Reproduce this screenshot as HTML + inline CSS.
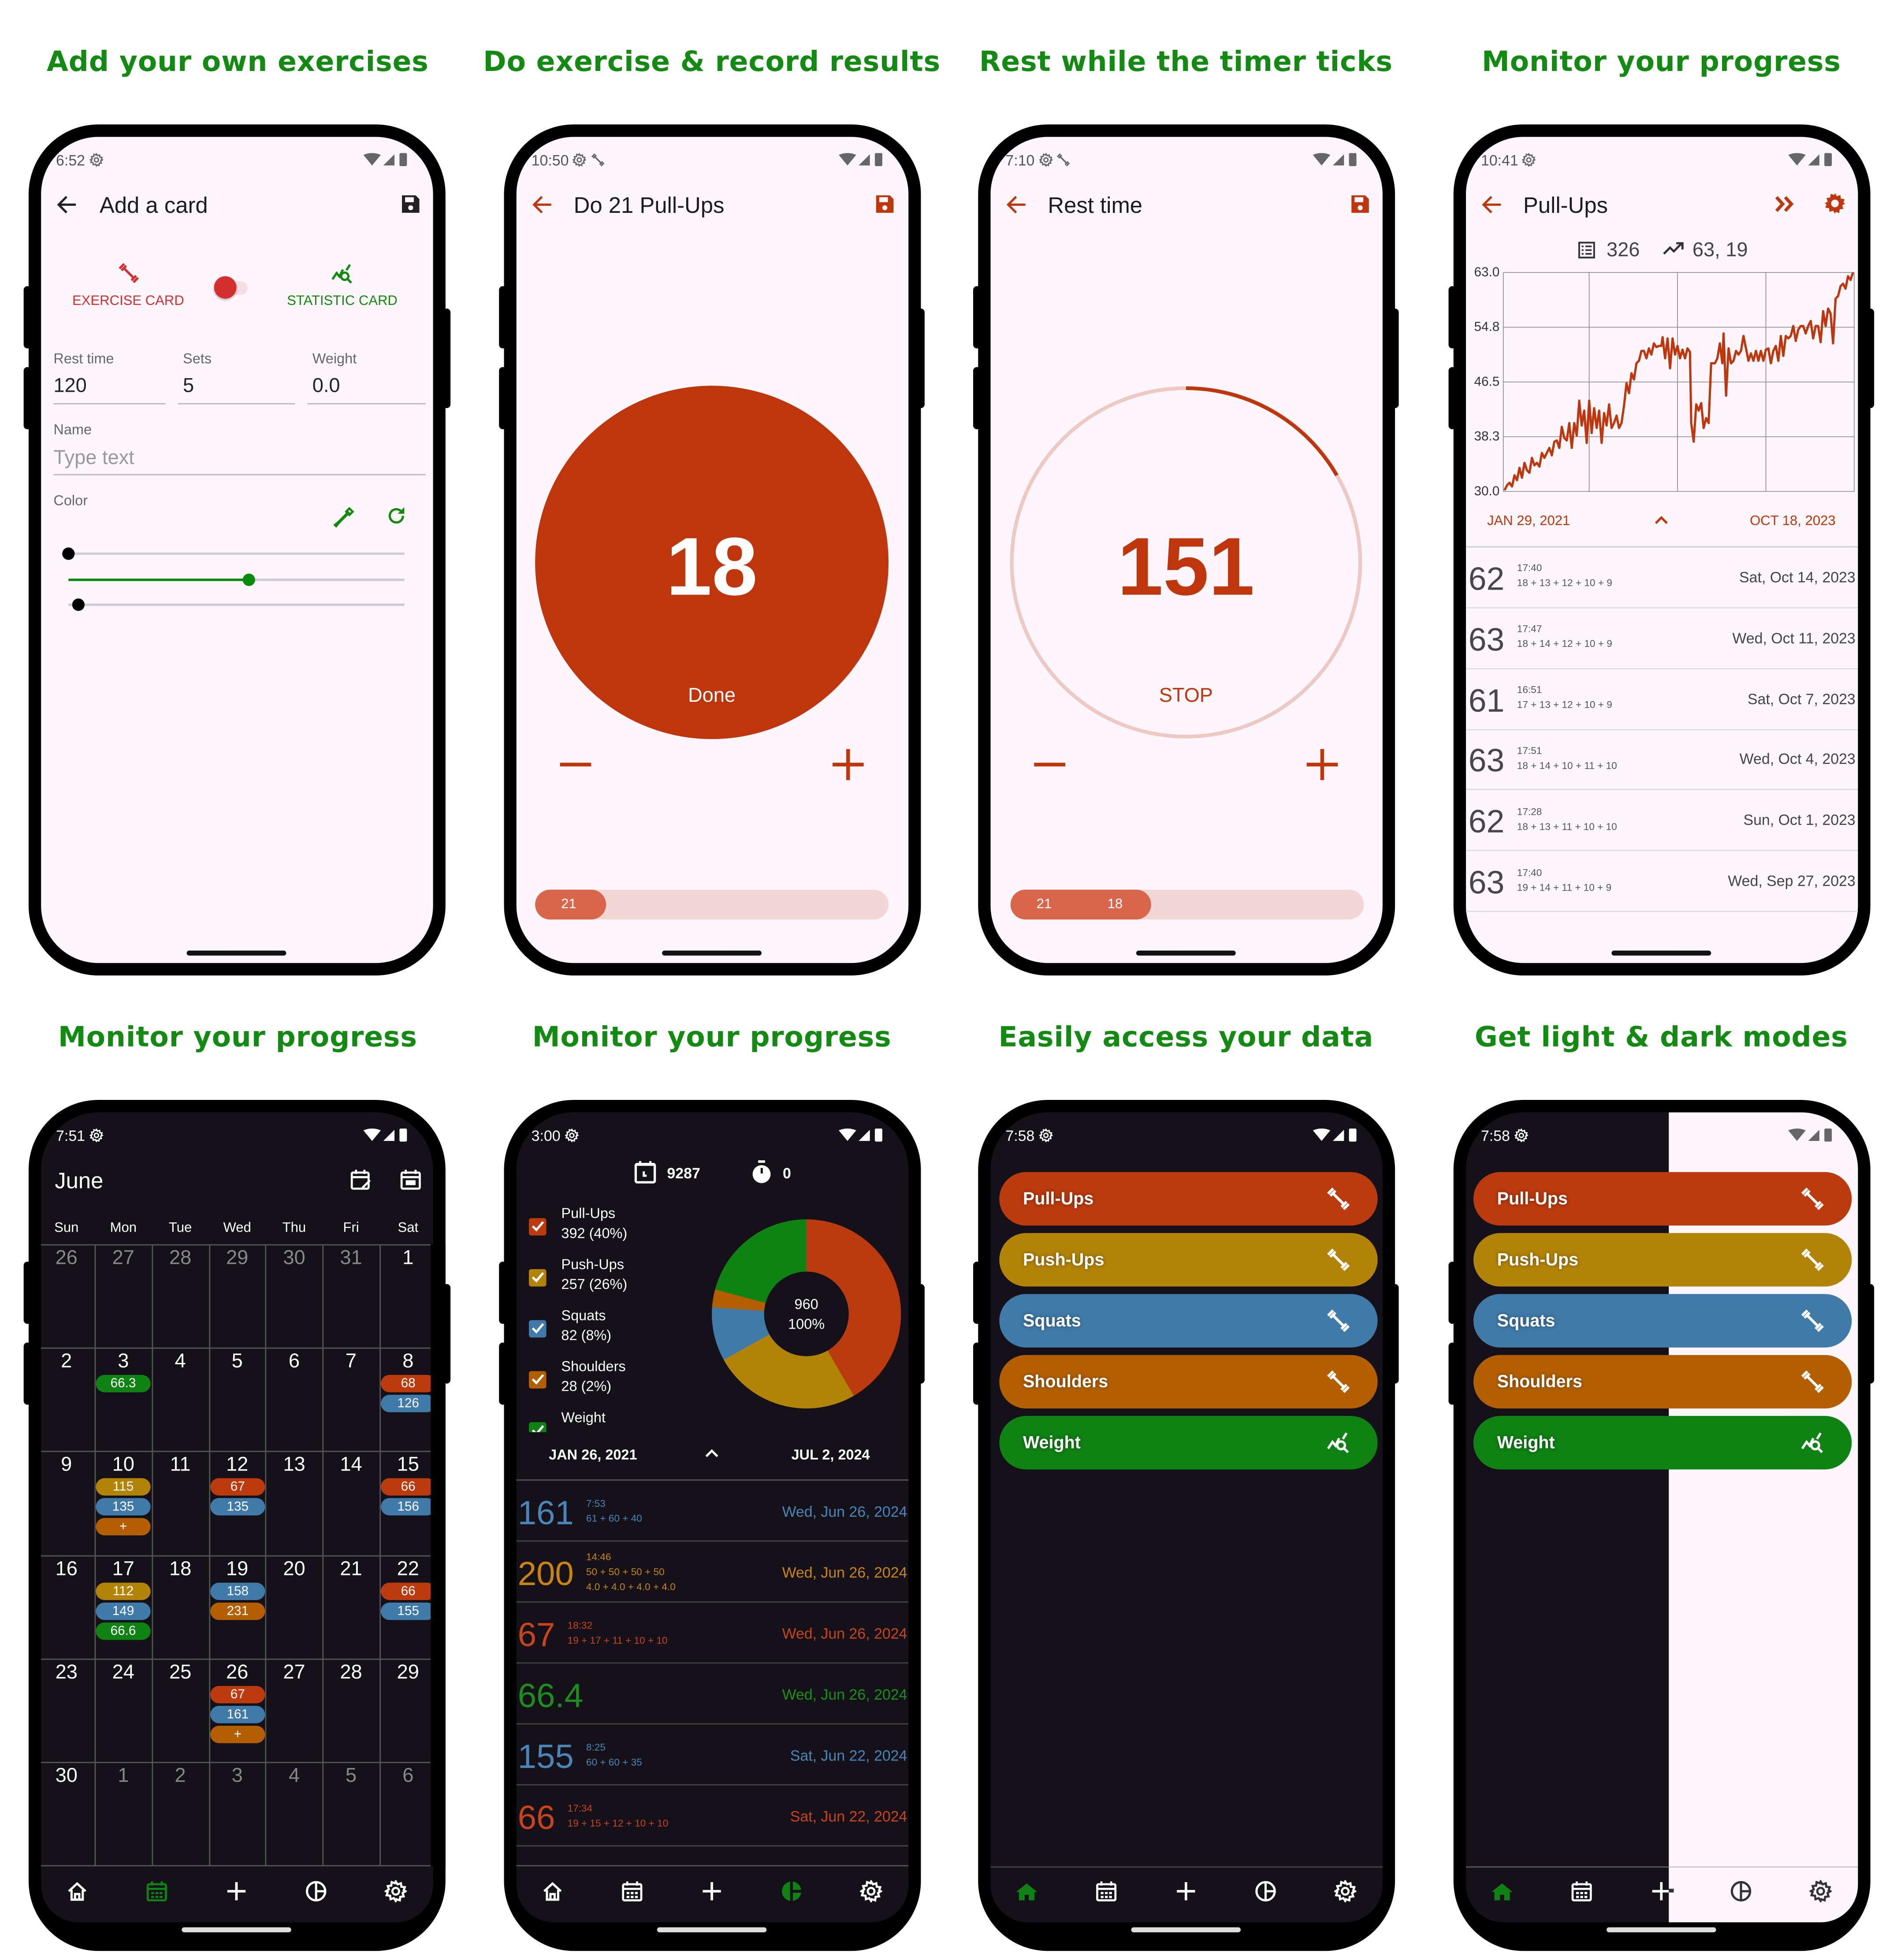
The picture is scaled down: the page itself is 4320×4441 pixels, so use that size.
<!DOCTYPE html>
<html><head><meta charset="utf-8"><style>
html,body{margin:0;padding:0;background:#fff;width:4320px;height:4440px;overflow:hidden}
#w{position:absolute;left:0;top:0;width:1530px;height:1573px;transform:scale(2.82353);transform-origin:0 0;font-family:"Liberation Sans","DejaVu Sans",sans-serif}
.a{position:absolute}
.t{position:absolute;line-height:1;white-space:nowrap}
.c{transform:translateX(-50%)}
.r{transform:translateX(-100%)}
.ttl{position:absolute;width:400px;text-align:center;font-family:"DejaVu Sans",sans-serif;font-weight:bold;font-size:22.4px;color:#138a12;line-height:1;letter-spacing:.3px}
.ph{position:absolute;width:335px;height:684px;background:#000;border-radius:56px}
.sc{position:absolute;left:10px;top:10px;width:315px;height:664px;border-radius:46px;overflow:hidden;background:#fdf7fd}
.dk .sc{background:#141218;height:651px;border-radius:46px 46px 30px 30px}
.btnL{position:absolute;background:#000;border-radius:3px}
.ul{position:absolute;height:1px;background:#b9b5bd}
.bd{position:absolute;height:14px;border-radius:7px;color:#fff;font-size:10.5px;line-height:14px;text-align:center}
.cg{position:absolute;background:#555;}
.pill{position:absolute;left:0;width:304px;height:43px;border-radius:22px;color:#fff;font-size:14px;font-weight:bold;line-height:43px;text-indent:19px;text-shadow:0 0 3px rgba(0,0,0,.4)}
.hb{position:absolute;height:4px;border-radius:2px;width:80px}
</style></head><body><div id="w">
<svg width="0" height="0" style="position:absolute">
<defs>
<symbol id="db" viewBox="0 0 16 16"><path d="M4 4L12 12" stroke="currentColor" stroke-width="1.8" fill="none"/><path d="M1 4.5L4.5 1M2.5 6L6 2.5M10 13.5L13.5 10M11.5 15L15 11.5" stroke="currentColor" stroke-width="1.8" fill="none"/></symbol>
<symbol id="st" viewBox="0 0 16 16"><path d="M1 12L4 7.5L6 10L8.5 5" stroke="currentColor" stroke-width="1.6" fill="none"/><circle cx="9.8" cy="9.8" r="2.6" stroke="currentColor" stroke-width="1.6" fill="none"/><path d="M11.8 11.8L14.5 14.5M11 5.5L13.5 1.5" stroke="currentColor" stroke-width="1.6" fill="none"/></symbol>
<symbol id="sb" viewBox="0 0 38 12"><path d="M0 1.5Q7 -1.5 14 1.5L7 10Z"/><path d="M16 10L25 1V10Z"/><rect x="29" y="0" width="6" height="10.5" rx="1"/></symbol>
<symbol id="ar" viewBox="0 0 16 16"><path d="M15 8H2M8 2L2 8l6 6" stroke="currentColor" stroke-width="1.7" fill="none"/></symbol>
<symbol id="sv" viewBox="0 0 16 16"><path d="M1 1H12L15 4V15H1Z" fill="currentColor"/><rect x="3.5" y="2.5" width="7" height="4" fill="#fdf7fd"/><circle cx="8" cy="11" r="2" fill="#fdf7fd"/></symbol>
<symbol id="gr" viewBox="0 0 16 16"><path d="M8 1l1.3 2.1 2.4-.8.3 2.5 2.5.3-.8 2.4L15 8l-2.1 1.3.8 2.4-2.5.3-.3 2.5-2.4-.8L8 15l-1.3-2.1-2.4.8-.3-2.5-2.5-.3.8-2.4L1 8l2.1-1.3-.8-2.4 2.5-.3.3-2.5 2.4.8Z" fill="currentColor"/><circle cx="8" cy="8" r="2.6" fill="var(--h,#fdf7fd)"/></symbol>
<symbol id="gro" viewBox="0 0 16 16"><path d="M8 1l1.3 2.1 2.4-.8.3 2.5 2.5.3-.8 2.4L15 8l-2.1 1.3.8 2.4-2.5.3-.3 2.5-2.4-.8L8 15l-1.3-2.1-2.4.8-.3-2.5-2.5-.3.8-2.4L1 8l2.1-1.3-.8-2.4 2.5-.3.3-2.5 2.4.8Z" fill="none" stroke="currentColor" stroke-width="1.5"/><circle cx="8" cy="8" r="2.4" fill="none" stroke="currentColor" stroke-width="1.5"/></symbol>
<symbol id="hm" viewBox="0 0 16 16"><path d="M2 8L8 2.5L14 8M4 7V14H12V7M6.5 14V10H9.5V14" stroke="currentColor" stroke-width="1.6" fill="none"/></symbol>
<symbol id="hmf" viewBox="0 0 16 16"><path d="M0.5 8.5L8 2.5L15.5 8.5H13.5V14.5H9.5V10.5H6.5V14.5H2.5V8.5Z" fill="currentColor"/></symbol>
<symbol id="cl" viewBox="0 0 16 16"><rect x="1.5" y="3" width="13" height="11.5" rx="1" stroke="currentColor" stroke-width="1.5" fill="none"/><path d="M1.5 6.3H14.5M4.5 1V4M11.5 1V4" stroke="currentColor" stroke-width="1.5"/><path d="M4 8.5h2v1.6H4zM7 8.5h2v1.6H7zM10 8.5h2v1.6h-2zM4 11.3h2v1.6H4zM7 11.3h2v1.6H7zM10 11.3h2v1.6h-2z" fill="currentColor"/></symbol>
<symbol id="pl" viewBox="0 0 16 16"><path d="M8 1.5V14.5M1.5 8H14.5" stroke="currentColor" stroke-width="1.8"/></symbol>
<symbol id="pi" viewBox="0 0 16 16"><circle cx="8" cy="8" r="6.5" stroke="currentColor" stroke-width="1.6" fill="none"/><path d="M8 1.5V14.5M8 8H14.5" stroke="currentColor" stroke-width="1.6"/></symbol>
<symbol id="pif" viewBox="0 0 16 16"><path d="M7 1.1A7 7 0 0 0 7 14.9Z" fill="currentColor"/><path d="M9 1.1A7 7 0 0 1 14.9 7H9Z" fill="currentColor"/><path d="M9 9H14.9A7 7 0 0 1 9 14.9Z" fill="currentColor"/></symbol>
</defs></svg>

<div class="ttl" style="left:-9px;top:39px">Add your own exercises</div>
<div class="ttl" style="left:372px;top:39px">Do exercise &amp; record results</div>
<div class="ttl" style="left:753px;top:39px">Rest while the timer ticks</div>
<div class="ttl" style="left:1135px;top:39px">Monitor your progress</div>
<div class="ttl" style="left:-9px;top:823px">Monitor your progress</div>
<div class="ttl" style="left:372px;top:823px">Monitor your progress</div>
<div class="ttl" style="left:753px;top:823px">Easily access your data</div>
<div class="ttl" style="left:1135px;top:823px">Get light &amp; dark modes</div>

<div class="btnL" style="left:19px;top:230px;width:6px;height:50px"></div><div class="btnL" style="left:19px;top:295px;width:6px;height:50px"></div><div class="btnL" style="left:356px;top:248px;width:6px;height:80px"></div>
<div class="btnL" style="left:401px;top:230px;width:6px;height:50px"></div><div class="btnL" style="left:401px;top:295px;width:6px;height:50px"></div><div class="btnL" style="left:737px;top:248px;width:6px;height:80px"></div>
<div class="btnL" style="left:782px;top:230px;width:6px;height:50px"></div><div class="btnL" style="left:782px;top:295px;width:6px;height:50px"></div><div class="btnL" style="left:1118px;top:248px;width:6px;height:80px"></div>
<div class="btnL" style="left:1164px;top:230px;width:6px;height:50px"></div><div class="btnL" style="left:1164px;top:295px;width:6px;height:50px"></div><div class="btnL" style="left:1500px;top:248px;width:6px;height:80px"></div>
<div class="btnL" style="left:19px;top:1014px;width:6px;height:50px"></div><div class="btnL" style="left:19px;top:1079px;width:6px;height:50px"></div><div class="btnL" style="left:356px;top:1032px;width:6px;height:80px"></div>
<div class="btnL" style="left:401px;top:1014px;width:6px;height:50px"></div><div class="btnL" style="left:401px;top:1079px;width:6px;height:50px"></div><div class="btnL" style="left:737px;top:1032px;width:6px;height:80px"></div>
<div class="btnL" style="left:782px;top:1014px;width:6px;height:50px"></div><div class="btnL" style="left:782px;top:1079px;width:6px;height:50px"></div><div class="btnL" style="left:1118px;top:1032px;width:6px;height:80px"></div>
<div class="btnL" style="left:1164px;top:1014px;width:6px;height:50px"></div><div class="btnL" style="left:1164px;top:1079px;width:6px;height:50px"></div><div class="btnL" style="left:1500px;top:1032px;width:6px;height:80px"></div>

<div class="ph" style="left:23px;top:100px"><div class="sc"></div></div>
<div class="ph" style="left:405px;top:100px"><div class="sc"></div></div>
<div class="ph" style="left:786px;top:100px"><div class="sc"></div></div>
<div class="ph" style="left:1168px;top:100px"><div class="sc"></div></div>
<div class="ph dk" style="left:23px;top:884px"><div class="sc"></div></div>
<div class="ph dk" style="left:405px;top:884px"><div class="sc"></div></div>
<div class="ph dk" style="left:786px;top:884px"><div class="sc"></div></div>
<div class="ph dk" style="left:1168px;top:884px"><div class="sc"><div class="a" style="left:163px;top:0;width:160px;height:651px;background:#fdf7fd"></div></div></div>

<!-- PHONE 1 -->
<div class="t" style="left:45px;top:123px;font-size:12px;color:#555">6:52 <svg width="11" height="11" style="vertical-align:-1px;color:#666"><use href="#gro"/></svg></div>
<svg class="a" style="left:292px;top:123px;fill:#666" width="38" height="12"><use href="#sb"/></svg>
<svg class="a" style="left:45px;top:156px;color:#222" width="17" height="17"><use href="#ar"/></svg>
<div class="t" style="left:80px;top:156px;font-size:18px;color:#1d1b20">Add a card</div>
<svg class="a" style="left:322px;top:156px;color:#222" width="16" height="16"><use href="#sv"/></svg>
<svg class="a" style="left:95px;top:211px;color:#d32f2f" width="17" height="17"><use href="#db"/></svg>
<div class="t c" style="left:103px;top:237px;font-size:11px;color:#d32f2f">EXERCISE CARD</div>
<div class="a" style="left:177px;top:226px;width:22px;height:11px;border-radius:6px;background:#f6dde1"></div>
<div class="a" style="left:172px;top:222px;width:18px;height:18px;border-radius:50%;background:#d32f2f;box-shadow:0 1px 2px rgba(0,0,0,.3)"></div>
<svg class="a" style="left:266px;top:211px;color:#14890f" width="18" height="18"><use href="#st"/></svg>
<div class="t c" style="left:275px;top:237px;font-size:11px;color:#14890f">STATISTIC CARD</div>
<div class="t" style="left:43px;top:284px;font-size:11.5px;color:#666">Rest time</div>
<div class="t" style="left:147px;top:284px;font-size:11.5px;color:#666">Sets</div>
<div class="t" style="left:251px;top:284px;font-size:11.5px;color:#666">Weight</div>
<div class="t" style="left:43px;top:303px;font-size:16px;color:#222">120</div>
<div class="t" style="left:147px;top:303px;font-size:16px;color:#222">5</div>
<div class="t" style="left:251px;top:303px;font-size:16px;color:#222">0.0</div>
<div class="ul" style="left:43px;top:324px;width:90px"></div>
<div class="ul" style="left:143px;top:324px;width:94px"></div>
<div class="ul" style="left:247px;top:324px;width:95px"></div>
<div class="t" style="left:43px;top:341px;font-size:11.5px;color:#666">Name</div>
<div class="t" style="left:43px;top:361px;font-size:16px;color:#999">Type text</div>
<div class="ul" style="left:43px;top:381px;width:299px"></div>
<div class="t" style="left:43px;top:398px;font-size:11.5px;color:#666">Color</div>
<svg class="a" style="left:268px;top:407px" width="17" height="17" viewBox="0 0 16 16"><path d="M12 1.5L14.5 4L12.5 6L10 3.5ZM9 3.5L12.5 7M11 5.5L4 12.5L2 15L1 14L3.5 12L10.5 5" stroke="#14890f" stroke-width="1.6" fill="none"/></svg>
<svg class="a" style="left:310px;top:406px" width="17" height="17" viewBox="0 0 16 16"><path d="M13 8A5 5 0 1 1 11.5 4.5" stroke="#14890f" stroke-width="1.7" fill="none"/><path d="M14 1.5V6.5H9Z" fill="#14890f"/></svg>
<div class="a" style="left:55px;top:444px;width:270px;height:2px;background:#d0ccd4"></div>
<div class="a" style="left:50px;top:440px;width:10px;height:10px;border-radius:50%;background:#000"></div>
<div class="a" style="left:55px;top:465px;width:270px;height:2px;background:#d0ccd4"></div>
<div class="a" style="left:55px;top:465px;width:145px;height:2px;background:#0a8a0a"></div>
<div class="a" style="left:195px;top:461px;width:10px;height:10px;border-radius:50%;background:#0a8a0a"></div>
<div class="a" style="left:55px;top:485px;width:270px;height:2px;background:#d0ccd4"></div>
<div class="a" style="left:58px;top:481px;width:10px;height:10px;border-radius:50%;background:#000"></div>
<div class="hb" style="left:150px;top:764px;background:#111"></div>

<!-- PHONE 2 -->
<div class="t" style="left:427px;top:123px;font-size:12px;color:#555">10:50 <svg width="11" height="11" style="vertical-align:-1px;color:#666"><use href="#gro"/></svg> <svg width="11" height="11" style="vertical-align:-1px;color:#666"><use href="#db"/></svg></div>
<svg class="a" style="left:674px;top:123px;fill:#666" width="38" height="12"><use href="#sb"/></svg>
<svg class="a" style="left:427px;top:156px;color:#bf360c" width="17" height="17"><use href="#ar"/></svg>
<div class="t" style="left:461px;top:156px;font-size:18px;color:#1d1b20">Do 21 Pull-Ups</div>
<svg class="a" style="left:703px;top:156px;color:#bf360c" width="16" height="16"><use href="#sv"/></svg>
<div class="a" style="left:430px;top:310px;width:284px;height:284px;border-radius:50%;background:#bf360c"></div>
<div class="t c" style="left:572px;top:422px;font-size:66px;font-weight:bold;color:#fff">18</div>
<div class="t c" style="left:572px;top:552px;font-size:16px;color:#fff">Done</div>
<div class="a" style="left:450px;top:613px;width:25px;height:2.5px;background:#bf360c"></div>
<div class="a" style="left:669px;top:613px;width:25px;height:2.5px;background:#bf360c"></div>
<div class="a" style="left:680.3px;top:602px;width:2.5px;height:25px;background:#bf360c"></div>
<div class="a" style="left:430px;top:715px;width:284px;height:24px;border-radius:12px;background:#f3d6d6"></div>
<div class="a" style="left:430px;top:715px;width:57px;height:24px;border-radius:12px;background:#d9654a"></div>
<div class="t c" style="left:457px;top:722px;font-size:11px;color:#fff">21</div>
<div class="hb" style="left:532px;top:764px;background:#111"></div>

<!-- PHONE 3 -->
<div class="t" style="left:808px;top:123px;font-size:12px;color:#555">7:10 <svg width="11" height="11" style="vertical-align:-1px;color:#666"><use href="#gro"/></svg> <svg width="11" height="11" style="vertical-align:-1px;color:#666"><use href="#db"/></svg></div>
<svg class="a" style="left:1055px;top:123px;fill:#666" width="38" height="12"><use href="#sb"/></svg>
<svg class="a" style="left:808px;top:156px;color:#bf360c" width="17" height="17"><use href="#ar"/></svg>
<div class="t" style="left:842px;top:156px;font-size:18px;color:#1d1b20">Rest time</div>
<svg class="a" style="left:1085px;top:156px;color:#bf360c" width="16" height="16"><use href="#sv"/></svg>
<svg class="a" style="left:800px;top:300px" width="310" height="310" viewBox="800 300 310 310"><circle cx="953" cy="452" r="140" stroke="#eec9c3" stroke-width="3" fill="none"/><path d="M953 312A140 140 0 0 1 1074.2 382" stroke="#bf360c" stroke-width="3" fill="none"/></svg>
<div class="t c" style="left:953px;top:422px;font-size:66px;font-weight:bold;color:#bf360c">151</div>
<div class="t c" style="left:953px;top:552px;font-size:16px;color:#bf360c">STOP</div>
<div class="a" style="left:831px;top:613px;width:25px;height:2.5px;background:#bf360c"></div>
<div class="a" style="left:1050px;top:613px;width:25px;height:2.5px;background:#bf360c"></div>
<div class="a" style="left:1061.3px;top:602px;width:2.5px;height:25px;background:#bf360c"></div>
<div class="a" style="left:812px;top:715px;width:284px;height:24px;border-radius:12px;background:#f3d6d6"></div>
<div class="a" style="left:812px;top:715px;width:113px;height:24px;border-radius:12px;background:#d9654a"></div>
<div class="t c" style="left:839px;top:722px;font-size:11px;color:#fff">21</div>
<div class="t c" style="left:896px;top:722px;font-size:11px;color:#fff">18</div>
<div class="hb" style="left:913px;top:764px;background:#111"></div>

<!-- PHONE 4 -->
<div class="t" style="left:1190px;top:123px;font-size:12px;color:#555">10:41 <svg width="11" height="11" style="vertical-align:-1px;color:#666"><use href="#gro"/></svg></div>
<svg class="a" style="left:1437px;top:123px;fill:#666" width="38" height="12"><use href="#sb"/></svg>
<svg class="a" style="left:1190px;top:156px;color:#bf360c" width="17" height="17"><use href="#ar"/></svg>
<div class="t" style="left:1224px;top:156px;font-size:18px;color:#1d1b20">Pull-Ups</div>
<svg class="a" style="left:1426px;top:157px" width="16" height="14" viewBox="0 0 16 14"><path d="M1.5 1.5L6.5 7L1.5 12.5M8.5 1.5L13.5 7L8.5 12.5" stroke="#bf360c" stroke-width="2.6" fill="none"/></svg>
<svg class="a" style="left:1465px;top:154px;color:#bf360c;--h:#fdf7fd" width="19" height="19"><use href="#gr"/></svg>
<svg class="a" style="left:1268px;top:194px" width="14" height="14" viewBox="0 0 14 14"><rect x="1" y="1" width="12" height="12" stroke="#333" stroke-width="1.4" fill="none"/><path d="M3 4h1.5M6 4h5M3 7h1.5M6 7h5M3 10h1.5M6 10h5" stroke="#333" stroke-width="1.3"/></svg>
<div class="t" style="left:1291px;top:194px;font-size:16px;color:#444">326</div>
<svg class="a" style="left:1336px;top:194px" width="18" height="12" viewBox="0 0 18 12"><path d="M1 10L6 5L9 8L15 2M11 1.5H16V6.5" stroke="#333" stroke-width="1.7" fill="none"/></svg>
<div class="t" style="left:1360px;top:194px;font-size:16px;color:#444">63, 19</div>
<svg class="a" style="left:1178px;top:210px" width="315" height="195" viewBox="1178 210 315 195">
<g stroke="#8a8a8f" stroke-width=".6" fill="none"><path d="M1208 219H1490M1208 263H1490M1208 307H1490M1208 351H1490M1208 395H1490M1208 219V395M1277 219V395M1348 219V395M1419 219V395M1490 219V395"/></g>
<polyline fill="none" stroke="#bf360c" stroke-width="1.8" stroke-linejoin="round" points="1209,394 1211,390 1213,388 1215,391 1217,382 1219,386 1221,376 1223,384 1225,372 1227,378 1229,380 1231,368 1233,374 1235,372 1237,375 1239,364 1241,368 1243,364 1245,360 1247,366 1249,355 1251,354 1253,360 1255,343 1257,352 1259,354 1261,340 1263,360 1265,340 1267,350 1269,322 1271,342 1273,330 1275,356 1277,322 1279,348 1281,328 1283,344 1285,330 1287,356 1289,332 1291,342 1293,325 1295,344 1297,340 1299,334 1301,344 1303,340 1305,326 1307,308 1309,316 1311,300 1313,305 1315,292 1317,290 1319,282 1321,282 1323,288 1325,280 1327,285 1329,276 1331,279 1333,278 1335,278 1336,271 1338,288 1340,272 1342,296 1344,272 1346,285 1348,278 1350,288 1352,281 1354,288 1356,280 1358,283 1359,340 1361,355 1363,325 1365,330 1367,324 1369,344 1371,336 1373,340 1375,292 1378,292 1380,288 1382,276 1384,292 1385,268 1387,318 1389,280 1391,292 1393,290 1395,282 1397,285 1399,282 1401,270 1403,280 1405,290 1407,284 1409,290 1411,282 1413,290 1415,282 1417,290 1419,281 1421,280 1423,292 1425,282 1427,278 1429,290 1431,270 1433,286 1435,270 1437,272 1439,270 1441,262 1443,274 1445,265 1447,262 1449,262 1451,268 1453,262 1455,258 1457,272 1459,262 1461,262 1463,275 1465,250 1467,262 1469,248 1471,252 1473,276 1475,240 1477,238 1479,230 1481,228 1483,232 1485,222 1487,225 1489,219"/>
</svg>
<div class="t r" style="left:1205px;top:214px;font-size:10.5px;color:#333">63.0</div>
<div class="t r" style="left:1205px;top:258px;font-size:10.5px;color:#333">54.8</div>
<div class="t r" style="left:1205px;top:302px;font-size:10.5px;color:#333">46.5</div>
<div class="t r" style="left:1205px;top:346px;font-size:10.5px;color:#333">38.3</div>
<div class="t r" style="left:1205px;top:390px;font-size:10.5px;color:#333">30.0</div>
<div class="t" style="left:1195px;top:414px;font-size:11px;color:#bf360c">JAN 29, 2021</div>
<svg class="a" style="left:1329px;top:414px" width="12" height="8" viewBox="0 0 12 8"><path d="M1.5 6.5L6 2L10.5 6.5" stroke="#bf360c" stroke-width="1.8" fill="none"/></svg>
<div class="t r" style="left:1475px;top:414px;font-size:11px;color:#bf360c">OCT 18, 2023</div>
<div class="a" style="left:1178px;top:439px;width:315px;height:1px;background:#ccc"></div>
<div class="a" style="left:1178px;top:488px;width:315px;height:1px;background:#ddd"></div>
<div class="a" style="left:1178px;top:537px;width:315px;height:1px;background:#ddd"></div>
<div class="a" style="left:1178px;top:586px;width:315px;height:1px;background:#ddd"></div>
<div class="a" style="left:1178px;top:634px;width:315px;height:1px;background:#ddd"></div>
<div class="a" style="left:1178px;top:683px;width:315px;height:1px;background:#ddd"></div>
<div class="a" style="left:1178px;top:732px;width:315px;height:1px;background:#ddd"></div>
<div class="t" style="left:1180px;top:452px;font-size:26px;color:#49454f">62</div><div class="t" style="left:1219px;top:453px;font-size:8px;color:#555">17:40</div><div class="t" style="left:1219px;top:465px;font-size:8px;color:#555">18 + 13 + 12 + 10 + 9</div><div class="t r" style="left:1491px;top:458px;font-size:12px;color:#444">Sat, Oct 14, 2023</div>
<div class="t" style="left:1180px;top:501px;font-size:26px;color:#49454f">63</div><div class="t" style="left:1219px;top:502px;font-size:8px;color:#555">17:47</div><div class="t" style="left:1219px;top:514px;font-size:8px;color:#555">18 + 14 + 12 + 10 + 9</div><div class="t r" style="left:1491px;top:507px;font-size:12px;color:#444">Wed, Oct 11, 2023</div>
<div class="t" style="left:1180px;top:550px;font-size:26px;color:#49454f">61</div><div class="t" style="left:1219px;top:551px;font-size:8px;color:#555">16:51</div><div class="t" style="left:1219px;top:563px;font-size:8px;color:#555">17 + 13 + 12 + 10 + 9</div><div class="t r" style="left:1491px;top:556px;font-size:12px;color:#444">Sat, Oct 7, 2023</div>
<div class="t" style="left:1180px;top:598px;font-size:26px;color:#49454f">63</div><div class="t" style="left:1219px;top:600px;font-size:8px;color:#555">17:51</div><div class="t" style="left:1219px;top:612px;font-size:8px;color:#555">18 + 14 + 10 + 11 + 10</div><div class="t r" style="left:1491px;top:604px;font-size:12px;color:#444">Wed, Oct 4, 2023</div>
<div class="t" style="left:1180px;top:647px;font-size:26px;color:#49454f">62</div><div class="t" style="left:1219px;top:649px;font-size:8px;color:#555">17:28</div><div class="t" style="left:1219px;top:661px;font-size:8px;color:#555">18 + 13 + 11 + 10 + 10</div><div class="t r" style="left:1491px;top:653px;font-size:12px;color:#444">Sun, Oct 1, 2023</div>
<div class="t" style="left:1180px;top:696px;font-size:26px;color:#49454f">63</div><div class="t" style="left:1219px;top:698px;font-size:8px;color:#555">17:40</div><div class="t" style="left:1219px;top:710px;font-size:8px;color:#555">19 + 14 + 11 + 10 + 9</div><div class="t r" style="left:1491px;top:702px;font-size:12px;color:#444">Wed, Sep 27, 2023</div>
<div class="hb" style="left:1295px;top:764px;background:#111"></div>

<!-- PHONE 5 -->
<div class="t" style="left:45px;top:907px;font-size:12px;color:#fff">7:51 <svg width="11" height="11" style="vertical-align:-1px;color:#fff"><use href="#gro"/></svg></div>
<svg class="a" style="left:292px;top:907px;fill:#fff" width="38" height="12"><use href="#sb"/></svg>
<div class="t" style="left:44px;top:940px;font-size:18px;color:#fff">June</div>
<svg class="a" style="left:281px;top:939px;color:#fff" width="18" height="18" viewBox="0 0 16 16"><rect x="1.5" y="3" width="12" height="11.5" rx="1" stroke="#fff" stroke-width="1.5" fill="none"/><path d="M1.5 6.3H13.5M4.5 1V4M10.5 1V4M9 14L14.5 8.5" stroke="#fff" stroke-width="1.5"/></svg>
<svg class="a" style="left:321px;top:939px;color:#fff" width="18" height="18" viewBox="0 0 16 16"><rect x="1.5" y="3" width="13" height="11.5" rx="1" stroke="#fff" stroke-width="1.5" fill="none"/><path d="M1.5 6.3H14.5M4.5 1V4M11.5 1V4" stroke="#fff" stroke-width="1.5"/><rect x="4.5" y="8.5" width="7" height="3.5" fill="#fff"/></svg>
<div class="t c" style="left:53.4px;top:982px;font-size:11px;color:#fff">Sun</div>
<div class="t c" style="left:99.1px;top:982px;font-size:11px;color:#fff">Mon</div>
<div class="t c" style="left:144.9px;top:982px;font-size:11px;color:#fff">Tue</div>
<div class="t c" style="left:190.6px;top:982px;font-size:11px;color:#fff">Wed</div>
<div class="t c" style="left:236.4px;top:982px;font-size:11px;color:#fff">Thu</div>
<div class="t c" style="left:282.1px;top:982px;font-size:11px;color:#fff">Fri</div>
<div class="t c" style="left:327.9px;top:982px;font-size:11px;color:#fff">Sat</div>
<div class="cg" style="left:33px;top:1000px;width:315px;height:1px"></div>
<div class="cg" style="left:33px;top:1083px;width:315px;height:1px"></div>
<div class="cg" style="left:33px;top:1166px;width:315px;height:1px"></div>
<div class="cg" style="left:33px;top:1250px;width:315px;height:1px"></div>
<div class="cg" style="left:33px;top:1333px;width:315px;height:1px"></div>
<div class="cg" style="left:33px;top:1416px;width:315px;height:1px"></div>
<div class="cg" style="left:33px;top:1499px;width:315px;height:1px"></div>
<div class="cg" style="left:76px;top:1000px;width:1px;height:499px"></div>
<div class="cg" style="left:122px;top:1000px;width:1px;height:499px"></div>
<div class="cg" style="left:168px;top:1000px;width:1px;height:499px"></div>
<div class="cg" style="left:213px;top:1000px;width:1px;height:499px"></div>
<div class="cg" style="left:259px;top:1000px;width:1px;height:499px"></div>
<div class="cg" style="left:305px;top:1000px;width:1px;height:499px"></div>
<div style="position:absolute;left:0;top:0;font-size:16px;color:#fff">
<div class="t c" style="left:53.4px;top:1004px;color:#888">26</div><div class="t c" style="left:99.1px;top:1004px;color:#888">27</div><div class="t c" style="left:144.9px;top:1004px;color:#888">28</div><div class="t c" style="left:190.6px;top:1004px;color:#888">29</div><div class="t c" style="left:236.4px;top:1004px;color:#888">30</div><div class="t c" style="left:282.1px;top:1004px;color:#888">31</div><div class="t c" style="left:327.9px;top:1004px">1</div>
<div class="t c" style="left:53.4px;top:1087px">2</div><div class="t c" style="left:99.1px;top:1087px">3</div><div class="t c" style="left:144.9px;top:1087px">4</div><div class="t c" style="left:190.6px;top:1087px">5</div><div class="t c" style="left:236.4px;top:1087px">6</div><div class="t c" style="left:282.1px;top:1087px">7</div><div class="t c" style="left:327.9px;top:1087px">8</div>
<div class="t c" style="left:53.4px;top:1170px">9</div><div class="t c" style="left:99.1px;top:1170px">10</div><div class="t c" style="left:144.9px;top:1170px">11</div><div class="t c" style="left:190.6px;top:1170px">12</div><div class="t c" style="left:236.4px;top:1170px">13</div><div class="t c" style="left:282.1px;top:1170px">14</div><div class="t c" style="left:327.9px;top:1170px">15</div>
<div class="t c" style="left:53.4px;top:1254px">16</div><div class="t c" style="left:99.1px;top:1254px">17</div><div class="t c" style="left:144.9px;top:1254px">18</div><div class="t c" style="left:190.6px;top:1254px">19</div><div class="t c" style="left:236.4px;top:1254px">20</div><div class="t c" style="left:282.1px;top:1254px">21</div><div class="t c" style="left:327.9px;top:1254px">22</div>
<div class="t c" style="left:53.4px;top:1337px">23</div><div class="t c" style="left:99.1px;top:1337px">24</div><div class="t c" style="left:144.9px;top:1337px">25</div><div class="t c" style="left:190.6px;top:1337px">26</div><div class="t c" style="left:236.4px;top:1337px">27</div><div class="t c" style="left:282.1px;top:1337px">28</div><div class="t c" style="left:327.9px;top:1337px">29</div>
<div class="t c" style="left:53.4px;top:1420px">30</div><div class="t c" style="left:99.1px;top:1420px;color:#888">1</div><div class="t c" style="left:144.9px;top:1420px;color:#888">2</div><div class="t c" style="left:190.6px;top:1420px;color:#888">3</div><div class="t c" style="left:236.4px;top:1420px;color:#888">4</div><div class="t c" style="left:282.1px;top:1420px;color:#888">5</div><div class="t c" style="left:327.9px;top:1420px;color:#888">6</div>
</div>
<div class="bd" style="left:77px;top:1105px;width:44px;background:#0f8214">66.3</div>
<div class="bd" style="left:306px;top:1105px;width:44px;background:#bb3a0e">68</div>
<div class="bd" style="left:306px;top:1121px;width:44px;background:#3f7aa8">126</div>
<div class="bd" style="left:77px;top:1188px;width:44px;background:#b38308">115</div>
<div class="bd" style="left:77px;top:1204px;width:44px;background:#3f7aa8">135</div>
<div class="bd" style="left:77px;top:1220px;width:44px;background:#b35f00">+</div>
<div class="bd" style="left:169px;top:1188px;width:44px;background:#bb3a0e">67</div>
<div class="bd" style="left:169px;top:1204px;width:44px;background:#3f7aa8">135</div>
<div class="bd" style="left:306px;top:1188px;width:44px;background:#bb3a0e">66</div>
<div class="bd" style="left:306px;top:1204px;width:44px;background:#3f7aa8">156</div>
<div class="bd" style="left:77px;top:1272px;width:44px;background:#b38308">112</div>
<div class="bd" style="left:77px;top:1288px;width:44px;background:#3f7aa8">149</div>
<div class="bd" style="left:77px;top:1304px;width:44px;background:#0f8214">66.6</div>
<div class="bd" style="left:169px;top:1272px;width:44px;background:#3f7aa8">158</div>
<div class="bd" style="left:169px;top:1288px;width:44px;background:#b35f00">231</div>
<div class="bd" style="left:306px;top:1272px;width:44px;background:#bb3a0e">66</div>
<div class="bd" style="left:306px;top:1288px;width:44px;background:#3f7aa8">155</div>
<div class="bd" style="left:169px;top:1355px;width:44px;background:#bb3a0e">67</div>
<div class="bd" style="left:169px;top:1371px;width:44px;background:#3f7aa8">161</div>
<div class="bd" style="left:169px;top:1387px;width:44px;background:#b35f00">+</div>
<div class="a" style="left:346px;top:1000px;width:12px;height:500px;background:#000"></div>
<svg class="a" style="left:53px;top:1511px;color:#fff" width="18" height="18"><use href="#hm"/></svg>
<svg class="a" style="left:117px;top:1511px;color:#0f8214" width="18" height="18"><use href="#cl"/></svg>
<svg class="a" style="left:181px;top:1511px;color:#fff" width="18" height="18"><use href="#pl"/></svg>
<svg class="a" style="left:245px;top:1511px;color:#fff" width="18" height="18"><use href="#pi"/></svg>
<svg class="a" style="left:309px;top:1511px;color:#fff" width="18" height="18"><use href="#gro"/></svg>
<div class="hb" style="left:146px;top:1549px;width:88px;background:#ddd"></div>

<!-- PHONE 6 -->
<div class="t" style="left:427px;top:907px;font-size:12px;color:#fff">3:00 <svg width="11" height="11" style="vertical-align:-1px;color:#fff"><use href="#gro"/></svg></div>
<svg class="a" style="left:674px;top:907px;fill:#fff" width="38" height="12"><use href="#sb"/></svg>
<svg class="a" style="left:509px;top:932px" width="19" height="20" viewBox="0 0 16 17"><rect x="1.5" y="3" width="13" height="12.5" rx="1" stroke="#fff" stroke-width="1.6" fill="none"/><path d="M4.5 1V4M11.5 1V4M1.5 3.5H14.5M7 8V11H9" stroke="#fff" stroke-width="1.5" fill="none"/></svg>
<div class="t" style="left:536px;top:937px;font-size:12px;font-weight:bold;color:#fff">9287</div>
<svg class="a" style="left:603px;top:932px" width="18" height="20" viewBox="0 0 16 18"><circle cx="8" cy="10.5" r="6.5" fill="#fff"/><rect x="5.5" y="0.5" width="5" height="1.8" fill="#fff"/><rect x="7.3" y="6" width="1.6" height="4" fill="#141218"/></svg>
<div class="t" style="left:629px;top:937px;font-size:12px;font-weight:bold;color:#fff">0</div>
<div class="a" style="left:415px;top:960px;width:160px;height:191px;overflow:hidden">
<div class="a" style="left:10px;top:18.5px;width:14px;height:14px;border-radius:2px;background:#bb3a0e"></div>
<div class="a" style="left:10px;top:59.5px;width:14px;height:14px;border-radius:2px;background:#b38308"></div>
<div class="a" style="left:10px;top:100.5px;width:14px;height:14px;border-radius:2px;background:#3f7aa8"></div>
<div class="a" style="left:10px;top:141.5px;width:14px;height:14px;border-radius:2px;background:#b35f00"></div>
<div class="a" style="left:10px;top:182.5px;width:14px;height:14px;border-radius:2px;background:#0f8214"></div>
<svg class="a" style="left:10px;top:18px" width="14" height="180" viewBox="0 0 14 180"><path d="M3 7.5L6 10.5L11.5 4M3 48.5L6 51.5L11.5 45M3 89.5L6 92.5L11.5 86M3 130.5L6 133.5L11.5 127M3 171.5L6 174.5L11.5 168" stroke="#fff" stroke-width="1.8" fill="none"/></svg>
<div class="t" style="left:36px;top:11px;font-size:11.5px;color:#fff">Pull-Ups</div><div class="t" style="left:36px;top:27px;font-size:11.5px;color:#fff">392 (40%)</div>
<div class="t" style="left:36px;top:52px;font-size:11.5px;color:#fff">Push-Ups</div><div class="t" style="left:36px;top:68px;font-size:11.5px;color:#fff">257 (26%)</div>
<div class="t" style="left:36px;top:93px;font-size:11.5px;color:#fff">Squats</div><div class="t" style="left:36px;top:109px;font-size:11.5px;color:#fff">82 (8%)</div>
<div class="t" style="left:36px;top:134px;font-size:11.5px;color:#fff">Shoulders</div><div class="t" style="left:36px;top:150px;font-size:11.5px;color:#fff">28 (2%)</div>
<div class="t" style="left:36px;top:175px;font-size:11.5px;color:#fff">Weight</div>
</div>
<div class="a" style="left:572px;top:980px;width:152px;height:152px;border-radius:50%;background:conic-gradient(#bb3a0e 0deg 150deg,#b38308 150deg 241deg,#3f7aa8 241deg 274deg,#b35f00 274deg 285deg,#0f8214 285deg 360deg)"></div>
<div class="a" style="left:614px;top:1022px;width:68px;height:68px;border-radius:50%;background:#141218"></div>
<div class="t c" style="left:648px;top:1044px;font-size:11.5px;color:#fff">960</div>
<div class="t c" style="left:648px;top:1060px;font-size:11.5px;color:#fff">100%</div>
<div class="t" style="left:441px;top:1165px;font-size:11.5px;font-weight:bold;color:#fff">JAN 26, 2021</div>
<svg class="a" style="left:566px;top:1164px" width="12" height="8" viewBox="0 0 12 8"><path d="M1.5 6.5L6 2L10.5 6.5" stroke="#fff" stroke-width="1.8" fill="none"/></svg>
<div class="t r" style="left:699px;top:1165px;font-size:11.5px;font-weight:bold;color:#fff">JUL 2, 2024</div>
<div class="a" style="left:415px;top:1189px;width:315px;height:1px;background:#555"></div>
<div class="a" style="left:415px;top:1238px;width:315px;height:1px;background:#444"></div>
<div class="a" style="left:415px;top:1287px;width:315px;height:1px;background:#444"></div>
<div class="a" style="left:415px;top:1336px;width:315px;height:1px;background:#444"></div>
<div class="a" style="left:415px;top:1385px;width:315px;height:1px;background:#444"></div>
<div class="a" style="left:415px;top:1434px;width:315px;height:1px;background:#444"></div>
<div class="a" style="left:415px;top:1483px;width:315px;height:1px;background:#444"></div>
<div class="a" style="left:415px;top:1499px;width:315px;height:1px;background:#555"></div>
<div class="t" style="left:416px;top:1203px;font-size:27px;color:#4a85b8">161</div><div class="t" style="left:471px;top:1205px;font-size:8px;color:#4a85b8">7:53</div><div class="t" style="left:471px;top:1217px;font-size:8px;color:#4a85b8">61 + 60 + 40</div><div class="t r" style="left:729px;top:1209px;font-size:12px;color:#4a85b8">Wed, Jun 26, 2024</div>
<div class="t" style="left:416px;top:1252px;font-size:27px;color:#c8840c">200</div><div class="t" style="left:471px;top:1248px;font-size:8px;color:#c8840c">14:46</div><div class="t" style="left:471px;top:1260px;font-size:8px;color:#c8840c">50 + 50 + 50 + 50</div><div class="t" style="left:471px;top:1272px;font-size:8px;color:#c8840c">4.0 + 4.0 + 4.0 + 4.0</div><div class="t r" style="left:729px;top:1258px;font-size:12px;color:#c8840c">Wed, Jun 26, 2024</div>
<div class="t" style="left:416px;top:1301px;font-size:27px;color:#c9431c">67</div><div class="t" style="left:456px;top:1303px;font-size:8px;color:#c9431c">18:32</div><div class="t" style="left:456px;top:1315px;font-size:8px;color:#c9431c">19 + 17 + 11 + 10 + 10</div><div class="t r" style="left:729px;top:1307px;font-size:12px;color:#c9431c">Wed, Jun 26, 2024</div>
<div class="t" style="left:416px;top:1350px;font-size:27px;color:#1a8f1a">66.4</div><div class="t r" style="left:729px;top:1356px;font-size:12px;color:#1a8f1a">Wed, Jun 26, 2024</div>
<div class="t" style="left:416px;top:1399px;font-size:27px;color:#4a85b8">155</div><div class="t" style="left:471px;top:1401px;font-size:8px;color:#4a85b8">8:25</div><div class="t" style="left:471px;top:1413px;font-size:8px;color:#4a85b8">60 + 60 + 35</div><div class="t r" style="left:729px;top:1405px;font-size:12px;color:#4a85b8">Sat, Jun 22, 2024</div>
<div class="t" style="left:416px;top:1448px;font-size:27px;color:#c9431c">66</div><div class="t" style="left:456px;top:1450px;font-size:8px;color:#c9431c">17:34</div><div class="t" style="left:456px;top:1462px;font-size:8px;color:#c9431c">19 + 15 + 12 + 10 + 10</div><div class="t r" style="left:729px;top:1454px;font-size:12px;color:#c9431c">Sat, Jun 22, 2024</div>
<svg class="a" style="left:435px;top:1511px;color:#fff" width="18" height="18"><use href="#hm"/></svg>
<svg class="a" style="left:499px;top:1511px;color:#fff" width="18" height="18"><use href="#cl"/></svg>
<svg class="a" style="left:563px;top:1511px;color:#fff" width="18" height="18"><use href="#pl"/></svg>
<svg class="a" style="left:627px;top:1511px;color:#0f8214" width="18" height="18"><use href="#pif"/></svg>
<svg class="a" style="left:691px;top:1511px;color:#fff" width="18" height="18"><use href="#gro"/></svg>
<div class="hb" style="left:528px;top:1549px;width:88px;background:#ddd"></div>

<!-- PHONE 7 -->
<div class="t" style="left:808px;top:907px;font-size:12px;color:#fff">7:58 <svg width="11" height="11" style="vertical-align:-1px;color:#fff"><use href="#gro"/></svg></div>
<svg class="a" style="left:1055px;top:907px;fill:#fff" width="38" height="12"><use href="#sb"/></svg>
<div class="a" style="left:803px;top:942px;width:304px;height:250px">
<div class="pill" style="top:0;background:#bb3a0e">Pull-Ups</div>
<div class="pill" style="top:49px;background:#b38308">Push-Ups</div>
<div class="pill" style="top:98px;background:#3f7aa8">Squats</div>
<div class="pill" style="top:147px;background:#b35f00">Shoulders</div>
<div class="pill" style="top:196px;background:#0f8214">Weight</div>
<svg class="a" style="left:263px;top:12px;color:#fff" width="19" height="19"><use href="#db"/></svg>
<svg class="a" style="left:263px;top:61px;color:#fff" width="19" height="19"><use href="#db"/></svg>
<svg class="a" style="left:263px;top:110px;color:#fff" width="19" height="19"><use href="#db"/></svg>
<svg class="a" style="left:263px;top:159px;color:#fff" width="19" height="19"><use href="#db"/></svg>
<svg class="a" style="left:263px;top:208px;color:#fff" width="19" height="19"><use href="#st"/></svg>
</div>
<div class="a" style="left:796px;top:1500px;width:315px;height:1px;background:#444"></div>
<svg class="a" style="left:816px;top:1511px;color:#0f8214" width="18" height="18"><use href="#hmf"/></svg>
<svg class="a" style="left:880px;top:1511px;color:#fff" width="18" height="18"><use href="#cl"/></svg>
<svg class="a" style="left:944px;top:1511px;color:#fff" width="18" height="18"><use href="#pl"/></svg>
<svg class="a" style="left:1008px;top:1511px;color:#fff" width="18" height="18"><use href="#pi"/></svg>
<svg class="a" style="left:1072px;top:1511px;color:#fff" width="18" height="18"><use href="#gro"/></svg>
<div class="hb" style="left:909px;top:1549px;width:88px;background:#ddd"></div>

<!-- PHONE 8 -->
<div class="t" style="left:1190px;top:907px;font-size:12px;color:#fff">7:58 <svg width="11" height="11" style="vertical-align:-1px;color:#fff"><use href="#gro"/></svg></div>
<svg class="a" style="left:1437px;top:907px;fill:#666" width="38" height="12"><use href="#sb"/></svg>
<div class="a" style="left:1184px;top:942px;width:304px;height:250px">
<div class="pill" style="top:0;background:#bb3a0e">Pull-Ups</div>
<div class="pill" style="top:49px;background:#b38308">Push-Ups</div>
<div class="pill" style="top:98px;background:#3f7aa8">Squats</div>
<div class="pill" style="top:147px;background:#b35f00">Shoulders</div>
<div class="pill" style="top:196px;background:#0f8214">Weight</div>
<svg class="a" style="left:263px;top:12px;color:#fff" width="19" height="19"><use href="#db"/></svg>
<svg class="a" style="left:263px;top:61px;color:#fff" width="19" height="19"><use href="#db"/></svg>
<svg class="a" style="left:263px;top:110px;color:#fff" width="19" height="19"><use href="#db"/></svg>
<svg class="a" style="left:263px;top:159px;color:#fff" width="19" height="19"><use href="#db"/></svg>
<svg class="a" style="left:263px;top:208px;color:#fff" width="19" height="19"><use href="#st"/></svg>
</div>
<div class="a" style="left:1178px;top:1500px;width:315px;height:1px;background:#999;opacity:.5"></div>
<svg class="a" style="left:1198px;top:1511px;color:#0f8214" width="18" height="18"><use href="#hmf"/></svg>
<svg class="a" style="left:1262px;top:1511px;color:#fff" width="18" height="18"><use href="#cl"/></svg>
<svg class="a" style="left:1326px;top:1511px;color:#fff" width="18" height="18"><use href="#pl"/></svg>
<div class="a" style="left:1341px;top:1518px;width:4px;height:3px;background:#333"></div>
<svg class="a" style="left:1390px;top:1511px;color:#333" width="18" height="18"><use href="#pi"/></svg>
<svg class="a" style="left:1454px;top:1511px;color:#333" width="18" height="18"><use href="#gro"/></svg>
<div class="hb" style="left:1291px;top:1549px;width:88px;background:#ddd"></div>
</div></body></html>
